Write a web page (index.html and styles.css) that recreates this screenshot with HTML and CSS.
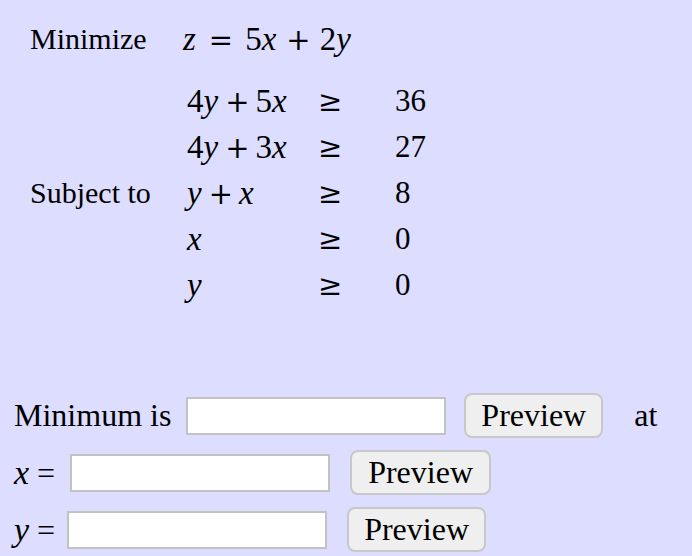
FILE: index.html
```html
<!DOCTYPE html>
<html lang="en">
<head>
    <meta charset="UTF-8">
    <meta name="viewport" content="width=device-width, initial-scale=1.0">
    <title>Linear program</title>
    <link rel="stylesheet" href="styles.css">
</head>
<body>

<!-- Problem statement -->
<div class="problem">
    <div class="label">Minimize</div>
    <div class="math objective">
        <i>z</i><span class="rel">=</span>5<i>x</i><span class="op">+</span>2<i>y</i>
    </div>

    <div class="constraints">
        <div class="label subject">Subject to</div>

        <div class="math expr">4<i>y</i><span class="op">+</span>5<i>x</i></div>
        <div class="ge">&ge;</div>
        <div class="rhs">36</div>

        <div class="math expr">4<i>y</i><span class="op">+</span>3<i>x</i></div>
        <div class="ge">&ge;</div>
        <div class="rhs">27</div>

        <div class="math expr"><i>y</i><span class="op">+</span><i>x</i></div>
        <div class="ge">&ge;</div>
        <div class="rhs">8</div>

        <div class="math expr"><i>x</i></div>
        <div class="ge">&ge;</div>
        <div class="rhs">0</div>

        <div class="math expr"><i>y</i></div>
        <div class="ge">&ge;</div>
        <div class="rhs">0</div>
    </div>
</div>

<!-- Answer -->
<div class="answer">
    <div class="answer-row">
        <span class="answer-label">Minimum is</span>
        <input type="text" class="answer-input first">
        <button class="preview">Preview</button>
        <span class="at">at</span>
    </div>
    <div class="answer-row">
        <span class="answer-label var"><i>x</i> =</span>
        <input type="text" class="answer-input">
        <button class="preview wide">Preview</button>
    </div>
    <div class="answer-row">
        <span class="answer-label var narrow"><i>y</i> =</span>
        <input type="text" class="answer-input">
        <button class="preview">Preview</button>
    </div>
</div>

</body>
</html>
```

FILE: styles.css
```css
body, html {
    margin: 0;
    height: 100%;
    overflow: hidden;
    background-color: #ddddff;
    font-family: "Liberation Serif", "Times New Roman", serif;
    color: #000;
}

i {
    font-style: italic;
}

/* Problem statement */
.problem {
    padding: 16px 0 0 30px;
    font-size: 30px;
    line-height: 46px;
    display: grid;
    grid-template-columns: 153px auto;
}

.math {
    font-size: 33px;
    white-space: nowrap;
}

.math i {
    margin-right: 1px;
}

.op, .rel, .ge {
    font-family: "DejaVu Serif", serif;
    font-size: 29px;
}

.op {
    margin: 0 6px;
}

.rel {
    margin: 0 12px;
}

.objective .op {
    margin: 0 9px;
}

.constraints {
    grid-column: 1 / 3;
    display: grid;
    grid-template-columns: 157px 131px 77px auto;
    grid-template-rows: repeat(5, 46px);
    grid-auto-flow: column;
    margin-top: 15px;
}

.subject {
    grid-column: 1;
    grid-row: 3;
    font-size: 30px;
}

.expr {
    grid-column: 2;
}

.ge {
    grid-column: 3;
}

.rhs {
    grid-column: 4;
    font-size: 31px;
}

/* Answer rows */
.answer {
    margin-top: 85px;
    padding-left: 14px;
    font-size: 32px;
}

.answer-row {
    display: flex;
    align-items: center;
    height: 45px;
    margin-bottom: 12px;
}

.answer-label {
    margin-right: 15px;
    white-space: nowrap;
}

.answer-label.var {
    margin-right: 15px;
}

.answer-label.narrow {
    margin-right: 12px;
}

.answer-label i {
    font-size: 34px;
}

.answer-input {
    width: 256px;
    height: 34px;
    padding: 0;
    border: 2px solid #c2c2c2;
    background-color: #fff;
    margin-right: 20px;
    font-size: 24px;
}

.answer-input.first {
    margin-right: 18px;
}

.preview {
    font-family: "Liberation Serif", "Times New Roman", serif;
    font-size: 32px;
    line-height: 37px;
    padding: 2px 15px;
    height: 45px;
    background-color: #efefef;
    border: 2px solid #c8c8c8;
    border-radius: 8px;
    color: #000;
}

.preview.wide {
    padding: 2px 16px;
}

.at {
    margin-left: 31px;
}
```
